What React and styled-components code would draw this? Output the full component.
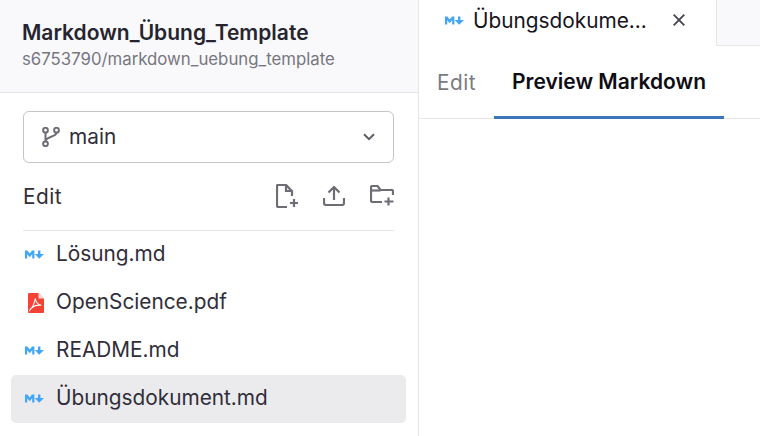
import React from "react";
import styled, { createGlobalStyle } from "styled-components";

const GlobalStyle = createGlobalStyle`
  html, body {
    margin: 0;
    padding: 0;
    background: #fff;
  }
  body {
    font-family: "Inter", "Liberation Sans", sans-serif;
    color: #2f2e3a;
  }
`;

const Page = styled.div`
  display: flex;
  width: 760px;
  height: 436px;
  overflow: hidden;
`;

const Sidebar = styled.aside`
  width: 418px;
  flex: none;
  border-right: 1px solid #e6e6ea;
  display: flex;
  flex-direction: column;
`;

const RepoHeader = styled.header`
  height: 90px;
  background: #f9f9fc;
  border-bottom: 1px solid #e4e4e8;
  padding: 0 22px 2px;
  display: flex;
  flex-direction: column;
  justify-content: center;
`;

const RepoTitle = styled.div`
  font-size: 21px;
  font-weight: 600;
  line-height: 26px;
  color: #26252f;
`;

const RepoPath = styled.div`
  margin-top: 2px;
  font-size: 16.8px;
  line-height: 22px;
  color: #77767f;
`;

const SidebarBody = styled.div`
  padding: 18px 24px 0 23px;
`;

const BranchSelect = styled.div`
  height: 52px;
  box-sizing: border-box;
  border: 1px solid #c4c4c9;
  border-radius: 6px;
  padding: 0 18px;
  display: flex;
  align-items: center;
  gap: 9px;
  font-size: 20.8px;
  color: #2f2e3a;
`;

const BranchName = styled.span`
  flex: 1;
  margin-bottom: 2px;
`;

const EditRow = styled.div`
  height: 68px;
  box-sizing: border-box;
  border-bottom: 1px solid #e6e6ea;
  display: flex;
  align-items: center;
  justify-content: space-between;
  font-size: 20.8px;
`;

const EditLabel = styled.span`
  letter-spacing: 0.5px;
`;

const ActionIcons = styled.div`
  display: flex;
  align-items: center;
  gap: 25px;
  margin-bottom: 2px;
  color: #6e6d75;
`;

const FileList = styled.ul`
  list-style: none;
  margin: 0;
  padding: 0 12px 0 11px;
`;

const FileRow = styled.li`
  height: 48px;
  box-sizing: border-box;
  padding: 0 0 4px 13px;
  display: flex;
  align-items: center;
  gap: 11px;
  font-size: 20.8px;
  border-radius: 5px;
  background: ${(p) => (p.$active ? "#ebebee" : "transparent")};
`;

const IconSlot = styled.span`
  width: 21px;
  flex: none;
  display: flex;
  justify-content: center;
  margin-top: 3px;
`;

const Main = styled.main`
  flex: 1;
  min-width: 0;
  display: flex;
  flex-direction: column;
`;

const TabStrip = styled.div`
  height: 46px;
  display: flex;
`;

const OpenTab = styled.div`
  width: 297px;
  flex: none;
  padding-left: 26px;
  box-sizing: border-box;
  display: flex;
  align-items: flex-start;
  font-size: 20.8px;
  color: #16151d;
`;

const TabIcon = styled.span`
  display: flex;
  margin-top: 16px;
  margin-right: 9px;
`;

const TabLabel = styled.span`
  line-height: 42px;
  width: 176px;
`;

const CloseIcon = styled.span`
  display: flex;
  margin-top: 14px;
  margin-left: 24px;
  color: #45444c;
`;

const StripRest = styled.div`
  flex: 1;
  background: #f9f9fc;
  border-left: 1px solid #e6e6ea;
  border-bottom: 1px solid #e6e6ea;
`;

const ViewTabs = styled.div`
  height: 73px;
  box-sizing: border-box;
  border-bottom: 1px solid #e6e6ea;
  display: flex;
  align-items: stretch;
  padding-left: 18px;
`;

const ViewTab = styled.div`
  display: flex;
  align-items: center;
  box-sizing: border-box;
  height: 73px;
  font-size: ${(p) => (p.$active ? "21px" : "20.8px")};
  padding: ${(p) => (p.$active ? "0 18px" : "0")};
  font-weight: ${(p) => (p.$active ? 600 : 400)};
  letter-spacing: ${(p) => (p.$active ? "0" : "0.5px")};
  color: ${(p) => (p.$active ? "#0e0d14" : "#7b7a82")};
  border-bottom: ${(p) => (p.$active ? "3px solid #3d76b8" : "none")};
  margin-left: ${(p) => (p.$active ? "18px" : "0")};
`;

const MarkdownIcon = () => (
  <svg width="19" height="9" viewBox="0 0 19 9" fill="#42a5f5">
    <path d="M0 .5h2.400L4.700 3.500 7 .5h2.400v8H7.200V4.200L4.700 7.200 2.200 4.200v4.300H0z" />
    <path d="M13 .5h2.400v3.400H19l-4.800 4.900-4.400-4.900H13z" />
  </svg>
);

const PdfIcon = () => (
  <svg width="21" height="20" viewBox="0 0 21 20">
    <path
      d="M5 0h9.500L20 5.500V19a1 1 0 0 1-1 1H5a1 1 0 0 1-1-1V1a1 1 0 0 1 1-1z"
      fill="#f44336"
    />
    <path d="M14.500 0L20 5.500h-5.500z" fill="#fbdcd9" />
    <path
      d="M11.300 5.500c.3 3 2 5.800 5.900 6.800-3.300-.5-6.300.1-9 2.200-1.300 1-2.100 2-2.300 2.500 1.500-1.200 4.200-5.900 5.400-11.500z"
      fill="none"
      stroke="#fff"
      strokeWidth="1.100"
    />
  </svg>
);

const BranchIcon = () => (
  <svg width="18" height="20" viewBox="0 0 18 20" fill="none" stroke="#6e6d75" strokeWidth="2">
    <circle cx="3.500" cy="3.200" r="2.400" />
    <circle cx="3.500" cy="16.800" r="2.400" />
    <circle cx="14.500" cy="3.200" r="2.400" />
    <path d="M3.500 5.500v9M14.500 5.500c0 5-11 3.500-11 9" />
  </svg>
);

const ChevronIcon = () => (
  <svg width="12" height="8" viewBox="0 0 12 8" fill="none" stroke="#5e5d66" strokeWidth="2">
    <path d="M1 1.200l5 5 5-5" />
  </svg>
);

const NewFileIcon = () => (
  <svg width="22" height="24" viewBox="0 0 22 24" fill="none" stroke="currentColor" strokeWidth="2.200">
    <path d="M11 23H2.500A1.500 1.500 0 0 1 1 21.500v-20A1.500 1.500 0 0 1 2.500 0.900H10l6 6.300V12" />
    <path d="M10 1v6h6" />
    <path d="M18 15v8M14 19h8" />
  </svg>
);

const UploadIcon = () => (
  <svg width="22" height="20" viewBox="0 0 22 20" fill="none" stroke="currentColor" strokeWidth="2.200">
    <path d="M11 14V1.500M5.500 6.500L11 1l5.500 5.500" />
    <path d="M1 12v5a2 2 0 0 0 2 2h16a2 2 0 0 0 2-2v-5" />
  </svg>
);

const NewFolderIcon = () => (
  <svg width="24" height="21" viewBox="0 0 24 21" fill="none" stroke="currentColor" strokeWidth="2.200">
    <path d="M12 17H2.500A1.500 1.500 0 0 1 1 15.500v-13A1.500 1.500 0 0 1 2.500 1h5l3 4h10.500A1.500 1.500 0 0 1 23 6.500V10" />
    <path d="M1 5.500h9.500" />
    <path d="M18.500 12.500v8M14.500 16.500h9" />
  </svg>
);

const CrossIcon = () => (
  <svg width="12" height="12" viewBox="0 0 12 12" fill="none" stroke="currentColor" strokeWidth="1.800">
    <path d="M.7.700l10.600 10.600M11.300.700L.7 11.300" />
  </svg>
);

const files = [
  { name: "Lösung.md", icon: <MarkdownIcon /> },
  { name: "OpenScience.pdf", icon: <PdfIcon /> },
  { name: "README.md", icon: <MarkdownIcon /> },
  { name: "Übungsdokument.md", icon: <MarkdownIcon />, active: true },
];

const App = () => {
  return (
    <Page>
      <GlobalStyle />
      <Sidebar>
        <RepoHeader>
          <RepoTitle>Markdown_Übung_Template</RepoTitle>
          <RepoPath>s6753790/markdown_uebung_template</RepoPath>
        </RepoHeader>
        <SidebarBody>
          <BranchSelect>
            <BranchIcon />
            <BranchName>main</BranchName>
            <ChevronIcon />
          </BranchSelect>
          <EditRow>
            <EditLabel>Edit</EditLabel>
            <ActionIcons>
              <NewFileIcon />
              <UploadIcon />
              <NewFolderIcon />
            </ActionIcons>
          </EditRow>
        </SidebarBody>
        <FileList>
          {files.map((file) => (
            <FileRow key={file.name} $active={file.active}>
              <IconSlot>{file.icon}</IconSlot>
              {file.name}
            </FileRow>
          ))}
        </FileList>
      </Sidebar>
      <Main>
        <TabStrip>
          <OpenTab>
            <TabIcon>
              <MarkdownIcon />
            </TabIcon>
            <TabLabel>Übungsdokume...</TabLabel>
            <CloseIcon>
              <CrossIcon />
            </CloseIcon>
          </OpenTab>
          <StripRest />
        </TabStrip>
        <ViewTabs>
          <ViewTab>Edit</ViewTab>
          <ViewTab $active>Preview Markdown</ViewTab>
        </ViewTabs>
      </Main>
    </Page>
  );
};

export default App;
